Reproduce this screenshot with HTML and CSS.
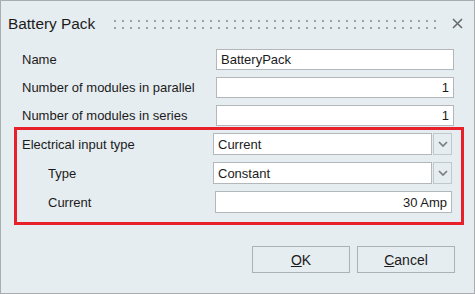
FILE: index.html
```html
<!DOCTYPE html>
<html lang="en">
<head>
  <meta charset="UTF-8" />
  <title>Battery Pack</title>
  <link rel="stylesheet" href="styles.css">
</head>
<body>
  <div class="dialog">
    <header class="titlebar">
      <h1>Battery Pack</h1>
      <svg class="grip" height="9">
        <defs>
          <pattern id="dots" width="8" height="7" patternUnits="userSpaceOnUse">
            <rect x="0" y="0" width="2" height="2" fill="#a0a0a0"/>
          </pattern>
        </defs>
        <rect width="100%" height="9" fill="url(#dots)"/>
      </svg>
      <svg class="close" width="11" height="11" viewBox="0 0 11 11">
        <path d="M1 1 L10 10 M10 1 L1 10" stroke="#6b6b6b" stroke-width="1.6" fill="none"/>
      </svg>
    </header>

    <form class="form">
      <div class="row">
        <label>Name</label>
        <input class="field" type="text" value="BatteryPack" />
      </div>
      <div class="row">
        <label>Number of modules in parallel</label>
        <input class="field num" type="text" value="1" />
      </div>
      <div class="row">
        <label>Number of modules in series</label>
        <input class="field num" type="text" value="1" />
      </div>

      <div class="highlight">
        <div class="row">
          <label>Electrical input type</label>
          <div class="combo">
            <span class="field">Current</span>
            <span class="arrow"><svg width="10" height="6" viewBox="0 0 10 6"><path d="M1 1 L5 5 L9 1" stroke="#7d7d7d" stroke-width="1.7" fill="none"/></svg></span>
          </div>
        </div>
        <div class="row sub">
          <label>Type</label>
          <div class="combo">
            <span class="field">Constant</span>
            <span class="arrow"><svg width="10" height="6" viewBox="0 0 10 6"><path d="M1 1 L5 5 L9 1" stroke="#7d7d7d" stroke-width="1.7" fill="none"/></svg></span>
          </div>
        </div>
        <div class="row sub">
          <label>Current</label>
          <input class="field num" type="text" value="30 Amp" />
        </div>
      </div>
    </form>

    <footer class="buttons">
      <button type="button"><u>O</u>K</button>
      <button type="button"><u>C</u>ancel</button>
    </footer>
  </div>
</body>
</html>
```

FILE: styles.css
```css
body {
  margin: 0;
  font-family: 'Liberation Sans', Arial, sans-serif;
  font-size: 13px;
  color: #1b1b1b;
  background: #e6edf1;
}
.dialog {
  width: 473px;
  height: 292px;
  border: 1px solid #a9adb0;
  background: #e6edf1;
  display: flex;
  flex-direction: column;
}
.titlebar {
  display: flex;
  align-items: center;
  height: 39px;
  padding: 3px 11px 0 7px;
}
.titlebar h1 {
  margin: 0;
  font-size: 15.4px;
  font-weight: normal;
  color: #1b1b1b;
}
.grip {
  flex: 1;
  margin: 1px 13px 0 19px;
}
.close {
  display: block;
}
.form {
  padding: 6px 10px 0 13px;
}
.row {
  display: flex;
  align-items: center;
  height: 21px;
  margin-bottom: 7px;
  padding: 0 0 0 8px;
}
.row label {
  width: 194px;
}
.field {
  box-sizing: border-box;
  width: 238px;
  height: 21px;
  border: 1px solid #b3b7ba;
  background: #fff;
  font: inherit;
  color: #1b1b1b;
  padding: 0 4px;
  margin: 0;
  outline: none;
}
.num {
  text-align: right;
}
.highlight {
  border: 3px solid #e8202a;
  margin-top: -6px;
  padding: 3px 9px 2px 5px;
}
.highlight .row {
  height: 22px;
  padding: 0;
}
.highlight .row.sub {
  padding-left: 26px;
}
.highlight .row.sub label {
  width: 167px;
}
.highlight .field {
  height: 22px;
}
.combo {
  display: flex;
  gap: 1px;
}
.combo .field {
  width: 219px;
  display: flex;
  align-items: center;
}
.arrow {
  box-sizing: border-box;
  width: 19px;
  height: 22px;
  border: 1px solid #c4c7ca;
  display: flex;
  align-items: center;
  justify-content: center;
}
.buttons {
  display: flex;
  justify-content: flex-end;
  gap: 7px;
  padding: 21px 19px 0 0;
}
button {
  width: 98px;
  height: 27px;
  border: 1px solid #adb1b4;
  background: #e6edf1;
  font: inherit;
  font-size: 14px;
  color: #1b1b1b;
  padding: 0;
}
```
